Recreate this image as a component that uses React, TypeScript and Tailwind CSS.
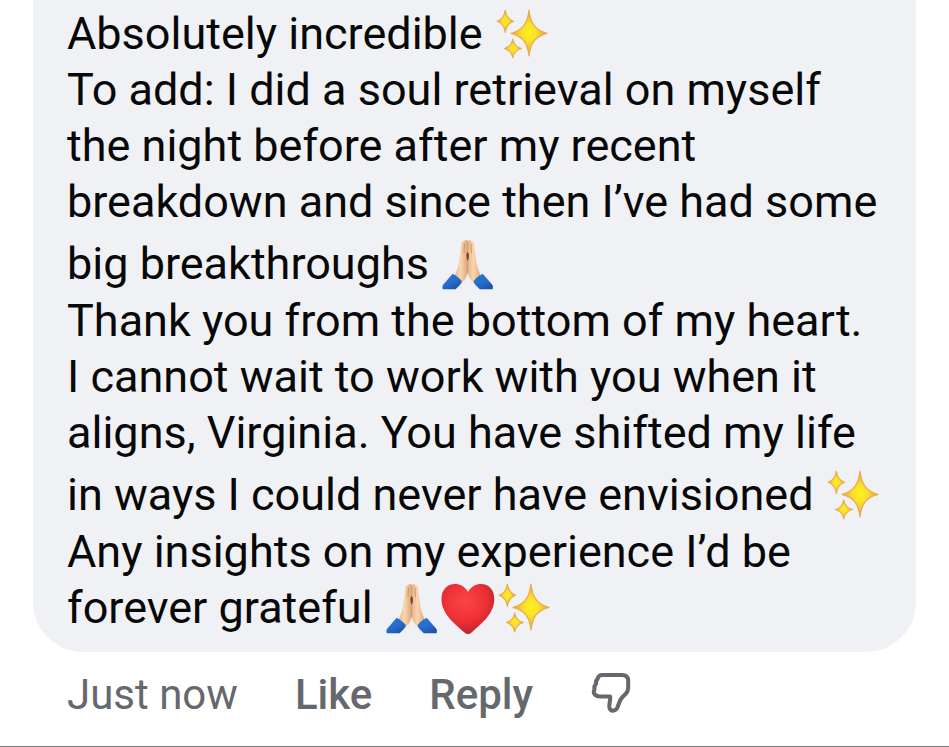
import type { ReactNode } from "react";

const EMOJI = "inline-block h-14 w-14 -mt-2 -mb-[14px] align-baseline";

function Sparkles() {
  return (
    <svg viewBox="0 0 56 56" role="img" aria-label="sparkles" className={EMOJI}>
      <defs>
        <radialGradient id="spark">
          <stop offset="0" stopColor="#fff01c" />
          <stop offset="0.4" stopColor="#fbdf2c" />
          <stop offset="1" stopColor="#eb9a3c" />
        </radialGradient>
      </defs>
      <g fill="url(#spark)" stroke="#e9ab4c" strokeWidth="1.2" strokeLinejoin="round">
        <path d="M35 3C36.5 16 41 23 53 26.3C41 29.500 36.5 36 35 49C33.5 36 29 29.500 17 26.3C29 23 33.5 16 35 3Z" />
        <path d="M11.3 3C12.2 9.5 14.500 12.5 19.5 14.2C14.500 16 12.2 19 11.3 25.3C10.4 19 8.2 16 3.2 14.2C8.2 12.5 10.4 9.5 11.3 3Z" />
        <path d="M18.7 32C19.5 37.5 22 40 27.3 41.5C22 43 19.5 45.5 18.7 51C17.9 45.5 15.500 43 10.5 41.5C15.500 40 17.9 37.5 18.7 32Z" />
      </g>
    </svg>
  );
}

function FoldedHands() {
  return (
    <svg viewBox="0 0 56 56" role="img" aria-label="folded hands" className={EMOJI}>
      <defs>
        <linearGradient id="skin" x1="0" x2="1">
          <stop offset="0" stopColor="#e8b88d" />
          <stop offset="0.45" stopColor="#fad5ae" />
          <stop offset="1" stopColor="#dfa676" />
        </linearGradient>
        <linearGradient id="sleeve" x1="0" y1="0" x2="0.6" y2="1">
          <stop offset="0" stopColor="#2378d8" />
          <stop offset="0.6" stopColor="#2a6cca" />
          <stop offset="1" stopColor="#1b55ac" />
        </linearGradient>
      </defs>
      <path fill="url(#skin)" d="M27.7 4C26.5 2.5 24.5 3 24.2 4.5C22.6 4 21.7 5 21.5 6.5L19.500 22C19 28 16.500 34 14.5 39L21 47C25 43 27.7 39 27.7 34Z" />
      <path fill="url(#skin)" d="M27.7 4C28.9 2.5 30.9 3 31.2 4.5C32.8 4 33.7 5 33.9 6.5L35.9 22C36.4 28 38.900 34 40.9 39L34.4 47C30.4 43 27.7 39 27.7 34Z" />
      <path fill="none" stroke="#c99468" strokeWidth="0.9" strokeLinecap="round" d="M27.7 5V36M24.4 7L24 16M31 7L31.400 16" />
      <path fill="#74442a" d="M27.7 15C29.500 17 29.200 21 27.7 24C26.2 21 25.900 17 27.7 15Z" />
      <path fill="url(#sleeve)" d="M12.500 37C14.500 37 21.500 42.500 21.800 44.5C21.800 46.500 17 51 15.5 52.3H3.2C2.2 52.3 2.2 48.500 3.3 47.500Z" />
      <path fill="url(#sleeve)" d="M42.900 37C40.900 37 33.900 42.500 33.600 44.5C33.600 46.500 38.4 51 39.9 52.3H52.2C53.2 52.3 53.2 48.500 52.1 47.500Z" />
    </svg>
  );
}

function Heart() {
  return (
    <svg viewBox="0 0 56 56" role="img" aria-label="red heart" className={EMOJI}>
      <defs>
        <radialGradient id="heart" cx="0.45" cy="0.35" r="0.65">
          <stop offset="0" stopColor="#fb4545" />
          <stop offset="0.6" stopColor="#ee3036" />
          <stop offset="1" stopColor="#b8252b" />
        </radialGradient>
      </defs>
      <path fill="url(#heart)" d="M28 11C25 5.500 20 3 15 3C7 3 1.500 9 1.500 18C1.500 33 15 43 24.500 51.500C27 53.800 29 53.800 31.500 51.500C41 43 54.300 33 54.300 18C54.300 9 49 3 41 3C36 3 31 5.500 28 11Z" />
    </svg>
  );
}

function ThumbDown() {
  return (
    <svg viewBox="0 0 44 44" className="h-11 w-11" fill="none" stroke="currentColor" strokeWidth="4" strokeLinecap="round" strokeLinejoin="round" aria-hidden="true">
      <path d="M12 5H32Q38.200 5 38.200 11V18C38.200 23 35 24.500 32.500 27C29.500 30 29 32.500 28 36C26.500 41.500 21 42 19.500 38C18.500 35 20.500 32 20.200 26.500H10C5 26.500 2.500 23 4.500 19.500Q3.800 16 6 14Q5.500 11 7.500 9Q8.500 5 12 5Z" />
    </svg>
  );
}

function Line({ children, tall = false }: { children: ReactNode; tall?: boolean }) {
  return <span className={tall ? "block pt-1.5 pb-px" : "block"}>{children}</span>;
}

export default function App() {
  return (
    <main className="overflow-hidden border-b border-[#77797b] bg-white font-['Roboto',sans-serif]">
      <article className="mx-[33px]">
        <p className="rounded-b-[50px] bg-[#f0f1f5] pt-1.5 pb-4 pl-[34px] text-[45px] leading-[56px] whitespace-nowrap text-[#080809]">
          <span className="block">Absolutely incredible <Sparkles /></span>
          <Line>To add: I did a soul retrieval on myself</Line>
          <Line>the night before after my recent</Line>
          <Line>breakdown and since then I’ve had some</Line>
          <Line tall>big breakthroughs <FoldedHands /></Line>
          <Line>Thank you from the bottom of my heart.</Line>
          <Line>I cannot wait to work with you when it</Line>
          <Line>aligns, Virginia. You have shifted my life</Line>
          <Line tall>in ways I could never have envisioned <Sparkles /></Line>
          <Line>Any insights on my experience I’d be</Line>
          <Line>forever grateful <FoldedHands /><Heart /><Sparkles /></Line>
        </p>
        <footer className="flex items-start gap-[57px] pt-[18px] pb-[26px] pl-[34px] text-[42px] leading-[50px] text-[#65686c]">
          <time>Just now</time>
          <button type="button" className="font-medium">Like</button>
          <button type="button" className="font-medium">Reply</button>
          <button type="button" aria-label="Dislike"><ThumbDown /></button>
        </footer>
      </article>
    </main>
  );
}
